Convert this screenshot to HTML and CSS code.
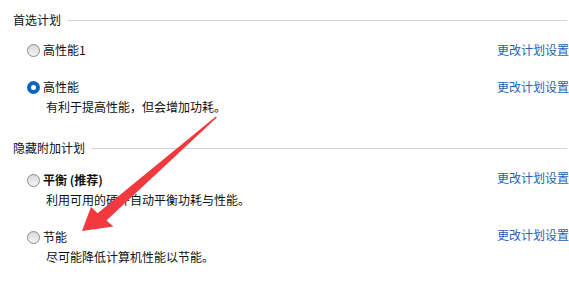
FILE: index.html
```html
<!DOCTYPE html>
<html>
<head>
<meta charset="utf-8">
<title>电源计划</title>
<link rel="stylesheet" href="styles.css">
</head>
<body>
<div class="page">
  <div class="group first">
    <div class="group-title"><span>首选计划</span><div class="rule"></div></div>
    <div class="plans">
      <div class="plan">
        <div class="plan-row">
          <label class="plan-name"><span class="radio"></span>高性能1</label>
          <a class="plan-link" href="#">更改计划设置</a>
        </div>
      </div>
      <div class="plan">
        <div class="plan-row">
          <label class="plan-name"><span class="radio checked"></span>高性能</label>
          <a class="plan-link" href="#">更改计划设置</a>
        </div>
        <div class="plan-desc">有利于提高性能，但会增加功耗。</div>
      </div>
    </div>
  </div>

  <div class="group second">
    <div class="group-title"><span>隐藏附加计划</span><div class="rule"></div></div>
    <div class="plans">
      <div class="plan">
        <div class="plan-row">
          <label class="plan-name bold"><span class="radio"></span>平衡 (推荐)</label>
          <a class="plan-link raised" href="#">更改计划设置</a>
        </div>
        <div class="plan-desc">利用可用的硬件自动平衡功耗与性能。</div>
      </div>
      <div class="plan">
        <div class="plan-row">
          <label class="plan-name"><span class="radio"></span>节能</label>
          <a class="plan-link raised" href="#">更改计划设置</a>
        </div>
        <div class="plan-desc">尽可能降低计算机性能以节能。</div>
      </div>
    </div>
  </div>

  <!-- red annotation arrow drawn over the page -->
  <svg class="arrow" width="569" height="305" viewBox="0 0 569 305">
    <polygon fill="#f2393e" points="82,231 91,207 97.6,213.2 215.8,116.4 216.8,117.6 106.4,220.6 113.5,226.5"/>
  </svg>
</div>
</body>
</html>
```

FILE: styles.css
```css
html, body {
  margin: 0;
  background: #ffffff;
}

.page {
  position: relative;
  width: 569px;
  height: 305px;
  padding-left: 13px;
  box-sizing: border-box;
  font-family: "Noto Sans CJK SC", "Microsoft YaHei", sans-serif;
  font-size: 12px;
  color: #0f0f0f;
  overflow: hidden;
}

.group.first {
  padding-top: 10px;
}

.group.second {
  margin-top: 21px;
}

/* section heading with the grey rule after it */
.group-title {
  display: flex;
  align-items: center;
  height: 20px;
  line-height: 20px;
}

.group-title span {
  margin-right: 7px;
}

.rule {
  flex: 1;
  height: 1px;
  background: #d2d2d2;
  margin-right: 2px;
}

.plans {
  display: flex;
  flex-direction: column;
  gap: 17px;
}

.first .plans {
  padding-top: 10px;
}

.second .plans {
  padding-top: 12px;
}

.plan-row {
  display: flex;
  justify-content: space-between;
  align-items: center;
  height: 20px;
  line-height: 20px;
}

.plan-name {
  display: flex;
  align-items: center;
}

.plan-name.bold {
  font-weight: bold;
}

.radio {
  width: 11px;
  height: 11px;
  border: 1px solid #8a8a8a;
  border-radius: 50%;
  background: linear-gradient(#d9d9d9, #f4f4f4);
  margin-left: 14px;
  margin-right: 3px;
  box-sizing: content-box;
}

.radio.checked {
  width: 5px;
  height: 5px;
  border: 4px solid #0a64c0;
  background: #ffffff;
}

.plan-link {
  color: #1f63b6;
  text-decoration: none;
  width: 72px;
}

.plan-link.raised {
  margin-top: -5px;
}

.plan-desc {
  height: 20px;
  line-height: 20px;
  padding-left: 33px;
}

.arrow {
  position: absolute;
  left: 0;
  top: 0;
}
```
